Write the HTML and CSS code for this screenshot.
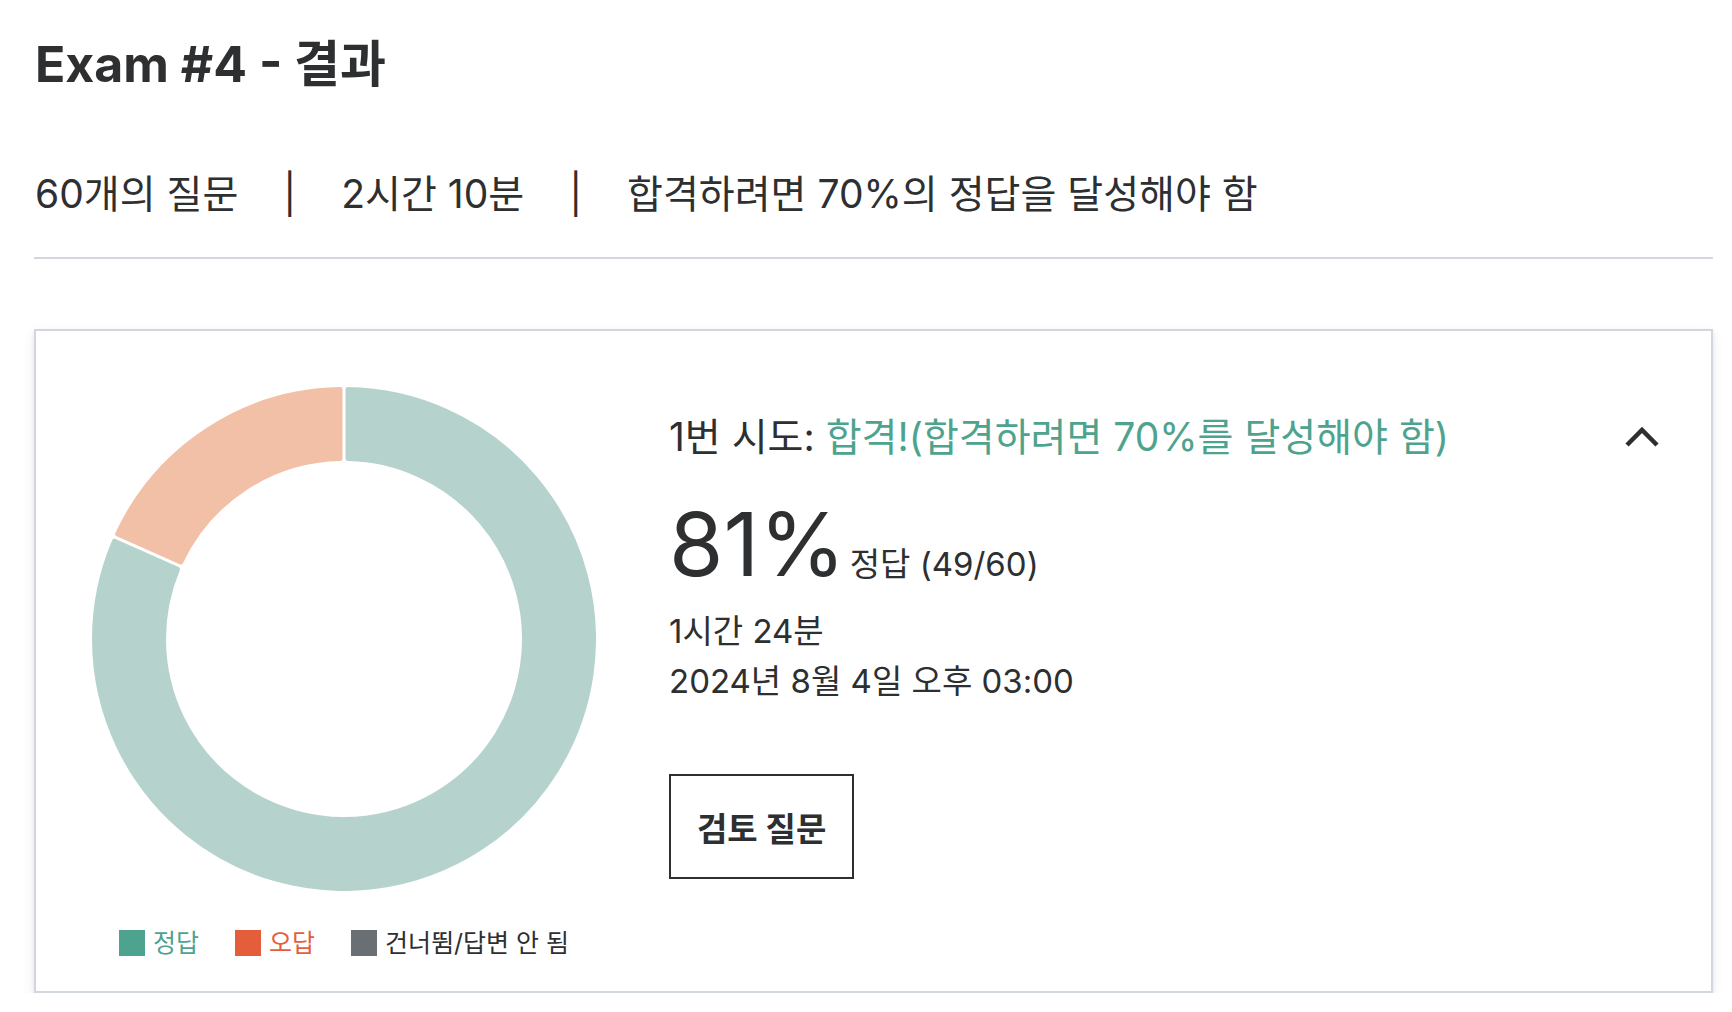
FILE: index.html
```html
<!DOCTYPE html>
<html lang="ko">
<head>
<meta charset="utf-8">
<title>Exam #4 - 결과</title>
<link rel="stylesheet" href="styles.css">
</head>
<body>
<main class="page">
  <h1 class="title">Exam #4 - 결과</h1>
  <div class="meta">
    <span>60개의 질문</span>
    <span class="sep">|</span>
    <span>2시간 10분</span>
    <span class="sep">|</span>
    <span>합격하려면 70%의 정답을 달성해야 함</span>
  </div>
  <section class="card">
    <div class="chart-col">
      <svg class="donut" viewBox="0 0 504 504" width="504" height="504" aria-hidden="true">
        <path class="seg seg-correct" d="M 256 2.532 A 249.5 249.5 0 1 1 22.471 154.185 L 85.517 182.255 A 180.5 180.5 0 1 0 256 71.544 Z"/>
        <path class="seg seg-wrong" d="M 25.725 146.877 A 249.5 249.5 0 0 1 248 2.532 L 248 71.544 A 180.5 180.5 0 0 0 88.771 174.947 Z"/>
      </svg>
      <ul class="legend">
        <li class="legend-item is-correct"><span class="swatch"></span>정답</li>
        <li class="legend-item is-wrong"><span class="swatch"></span>오답</li>
        <li class="legend-item is-skipped"><span class="swatch"></span>건너뜀/답변 안 됨</li>
      </ul>
    </div>
    <div class="info-col">
      <div class="attempt-row">
        <p class="attempt">1번 시도: <span class="pass">합격!(합격하려면 70%를 달성해야 함)</span></p>
        <button class="toggle" type="button" aria-label="접기">
          <svg viewBox="0 0 36 24" width="36" height="24"><polyline points="3,20 18,5 33,20"/></svg>
        </button>
      </div>
      <div class="score"><span class="pct">81%</span><span class="score-label">정답 (49/60)</span></div>
      <p class="line line-first">1시간 24분</p>
      <p class="line">2024년 8월 4일 오후 03:00</p>
      <button class="review" type="button">검토 질문</button>
    </div>
  </section>
</main>
</body>
</html>
```

FILE: styles.css
```css
* { box-sizing: border-box; }

html, body {
  margin: 0;
  background: #ffffff;
}

body {
  font-family: Inter, "Noto Sans CJK KR", sans-serif;
  color: #2d2f31;
}

.page {
  padding: 34px 19px 0 34px;
}

.title {
  margin: 0;
  padding-left: 1px;
  font-size: 50px;
  line-height: 60px;
  font-weight: 700;
}

.meta {
  margin-top: 76px;
  padding: 0 0 39px 1px;
  display: flex;
  gap: 45px;
  font-size: 39px;
  line-height: 48px;
  border-bottom: 2px solid #d1d7dc;
}

.card {
  margin-top: 70px;
  display: flex;
  align-items: flex-start;
  padding: 56px 0 35px 56px;
  border: 2px solid #d1d7dc;
  background: #fff;
  box-shadow: 0 2px 4px rgba(6, 17, 118, 0.08), 0 4px 12px rgba(6, 17, 118, 0.08);
}

.chart-col {
  width: 504px;
  display: flex;
  flex-direction: column;
  align-items: center;
  gap: 39px;
}

.donut { display: block; }

.seg {
  stroke-width: 5;
  stroke-linejoin: round;
}
.seg-correct { fill: #b5d3cc; stroke: #b5d3cc; }
.seg-wrong { fill: #f2c0a6; stroke: #f2c0a6; }

.legend {
  list-style: none;
  margin: 0;
  padding: 0;
  display: flex;
  gap: 36px;
  font-size: 25px;
  line-height: 26px;
}

.legend-item {
  display: flex;
  align-items: center;
  gap: 8px;
}

.swatch {
  width: 26px;
  height: 26px;
}

.is-correct { color: #4ea38e; }
.is-correct .swatch { background: #4ea38e; }
.is-wrong { color: #e45e3c; }
.is-wrong .swatch { background: #e45e3c; }
.is-skipped { color: #2d2f31; }
.is-skipped .swatch { background: #6a6f73; }

.info-col {
  flex: 1;
  margin-left: 73px;
  padding: 26px 51px 0 0;
}

.attempt-row {
  display: flex;
  align-items: center;
  justify-content: space-between;
  height: 48px;
}

.attempt {
  margin: 0;
  font-size: 39px;
  line-height: 48px;
}

.pass { color: #4ea38e; }

.toggle {
  display: block;
  padding: 0;
  border: 0;
  background: none;
  width: 36px;
  height: 24px;
}

.toggle svg {
  display: block;
  fill: none;
  stroke: #2d2f31;
  stroke-width: 4.5;
}

.score {
  margin-top: 39px;
  display: flex;
  align-items: baseline;
  gap: 4px;
}

.pct {
  font-size: 88px;
  line-height: 88px;
}

.score-label {
  font-size: 33px;
  line-height: 40px;
}

.line {
  margin: 0;
  font-size: 33px;
  line-height: 50px;
}

.line-first { margin-top: 18px; }

.review {
  margin-top: 68px;
  display: flex;
  align-items: center;
  height: 105px;
  padding: 0 26px;
  border: 2px solid #2d2f31;
  background: #fff;
  color: #2d2f31;
  font-family: inherit;
  font-size: 33px;
  font-weight: 700;
}
```
